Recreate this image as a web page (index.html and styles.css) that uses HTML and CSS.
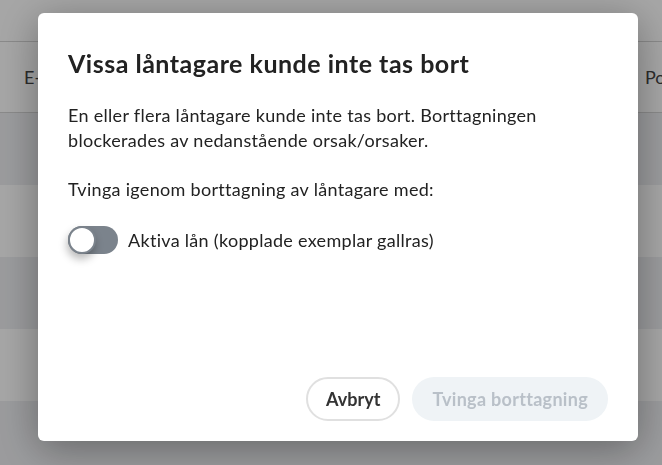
FILE: index.html
```html
<!DOCTYPE html>
<html lang="sv">
<head>
    <meta charset="UTF-8">
    <meta name="viewport" content="width=device-width, initial-scale=1.0">
    <title>Ta bort låntagare</title>
    <link rel="stylesheet" href="styles.css">
</head>
<body>
    <table class="borrowers">
        <thead>
            <tr>
                <th class="col-email">E-post</th>
                <th class="col-fill"></th>
                <th class="col-post">Postort</th>
            </tr>
        </thead>
        <tbody>
            <tr><td></td><td></td><td></td></tr>
            <tr><td></td><td></td><td></td></tr>
            <tr><td></td><td></td><td></td></tr>
            <tr><td></td><td></td><td></td></tr>
            <tr><td></td><td></td><td></td></tr>
        </tbody>
    </table>

    <div class="overlay">
        <div class="modal">
            <h2 class="modal-title">Vissa låntagare kunde inte tas bort</h2>
            <p class="modal-text">En eller flera låntagare kunde inte tas bort. Borttagningen blockerades av nedanstående orsak/orsaker.</p>
            <p class="modal-text">Tvinga igenom borttagning av låntagare med:</p>

            <label class="switch-row">
                <span class="switch"><span class="knob"></span></span>
                <span class="switch-label">Aktiva lån (kopplade exemplar gallras)</span>
            </label>

            <div class="modal-actions">
                <button class="btn btn-cancel">Avbryt</button>
                <button class="btn btn-force" disabled>Tvinga borttagning</button>
            </div>
        </div>
    </div>
</body>
</html>
```

FILE: styles.css
```css
body {
    font-family: Lato, "Open Sans", sans-serif;
    margin: 0;
    background-color: #fff;
    color: #222;
    overflow: hidden;
}
.borrowers {
    width: 100%;
    table-layout: fixed;
    border-collapse: collapse;
    margin-top: 41px;
}
.borrowers th {
    height: 70px;
    text-align: left;
    font-weight: normal;
    font-size: 18px;
    color: #444;
    border-top: 1px solid #d4d4d4;
    border-bottom: 1px solid #d4d4d4;
    padding: 0 0 0 24px;
    white-space: nowrap;
    overflow: hidden;
}
.borrowers .col-email {
    width: 176px;
}
.borrowers .col-post {
    width: 17px;
    padding-left: 0;
}
.borrowers td {
    height: 70px;
}
.borrowers tbody tr:nth-child(odd) {
    background-color: #eeeff2;
}
.overlay {
    position: fixed;
    inset: 0;
    background-color: rgba(0, 0, 0, 0.35);
    padding: 13px 0 0 38px;
}
.modal {
    width: 600px;
    height: 428px;
    box-sizing: border-box;
    background-color: #fff;
    border-radius: 6px;
    box-shadow: 0 8px 40px rgba(0, 0, 0, 0.35);
    padding: 35px 30px 20px 30px;
    display: flex;
    flex-direction: column;
}
.modal-title {
    margin: 0 0 25px 0;
    font-size: 25px;
    font-weight: 700;
    line-height: 30px;
    letter-spacing: 0.5px;
    color: #222;
}
.modal-text {
    margin: 0 0 24px 0;
    font-size: 18px;
    line-height: 25px;
    letter-spacing: 0.3px;
}
.switch-row {
    display: flex;
    align-items: center;
    gap: 10px;
    font-size: 18px;
    letter-spacing: 0.3px;
}
.switch {
    width: 50px;
    height: 28px;
    border-radius: 14px;
    background-color: #7b838c;
    position: relative;
}
.knob {
    position: absolute;
    left: 0;
    top: 0;
    width: 24px;
    height: 24px;
    border-radius: 50%;
    background-color: #fff;
    border: 2px solid #7b838c;
    box-shadow: -1px 5px 8px rgba(0, 0, 0, 0.28);
}
.modal-actions {
    margin-top: auto;
    display: flex;
    justify-content: flex-end;
    gap: 12px;
}
.btn {
    font-family: inherit;
    font-size: 18px;
    font-weight: 700;
    height: 44px;
    border-radius: 22px;
    cursor: pointer;
}
.btn-cancel {
    background-color: #fff;
    color: #333;
    border: 2px solid #e0e0e0;
    padding: 0 18px;
}
.btn-force {
    background-color: #eff3f6;
    color: #b9c0c8;
    border: none;
    padding: 0 20px;
    letter-spacing: 0.3px;
}
```
